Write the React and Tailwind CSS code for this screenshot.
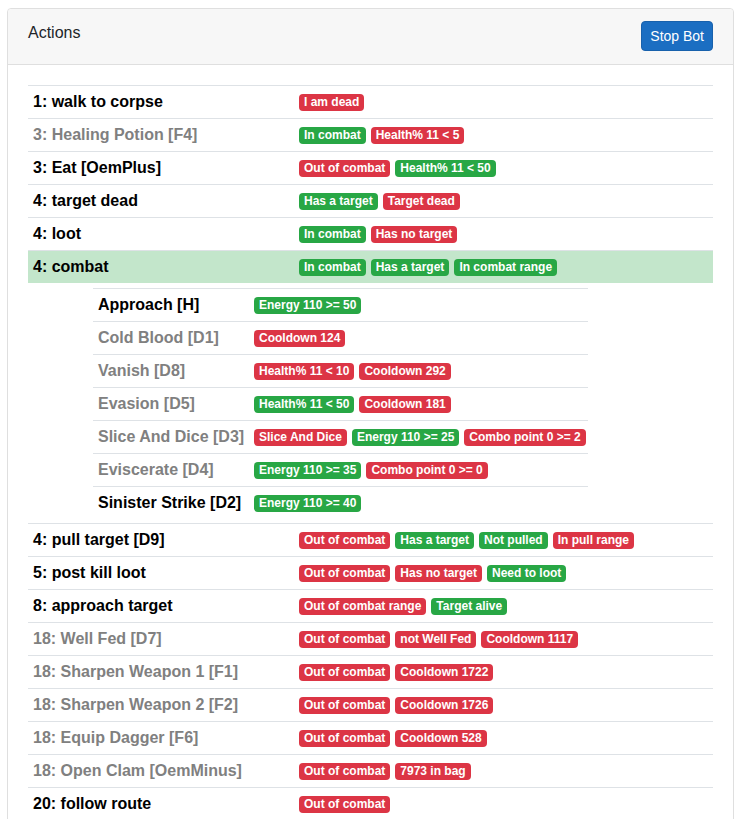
const G = "g"
const R = "r"

const actions = [
  { name: "1: walk to corpse", on: true, badges: [[R, "I am dead"]] },
  { name: "3: Healing Potion [F4]", on: false, badges: [[G, "In combat"], [R, "Health% 11 < 5"]] },
  { name: "3: Eat [OemPlus]", on: true, badges: [[R, "Out of combat"], [G, "Health% 11 < 50"]] },
  { name: "4: target dead", on: true, badges: [[G, "Has a target"], [R, "Target dead"]] },
  { name: "4: loot", on: true, badges: [[G, "In combat"], [R, "Has no target"]] },
  {
    name: "4: combat",
    on: true,
    active: true,
    badges: [[G, "In combat"], [G, "Has a target"], [G, "In combat range"]],
    spells: [
      { name: "Approach [H]", on: true, badges: [[G, "Energy 110 >= 50"]] },
      { name: "Cold Blood [D1]", on: false, badges: [[R, "Cooldown 124"]] },
      { name: "Vanish [D8]", on: false, badges: [[R, "Health% 11 < 10"], [R, "Cooldown 292"]] },
      { name: "Evasion [D5]", on: false, badges: [[G, "Health% 11 < 50"], [R, "Cooldown 181"]] },
      { name: "Slice And Dice [D3]", on: false, badges: [[R, "Slice And Dice"], [G, "Energy 110 >= 25"], [R, "Combo point 0 >= 2"]] },
      { name: "Eviscerate [D4]", on: false, badges: [[G, "Energy 110 >= 35"], [R, "Combo point 0 >= 0"]] },
      { name: "Sinister Strike [D2]", on: true, badges: [[G, "Energy 110 >= 40"]] },
    ],
  },
  { name: "4: pull target [D9]", on: true, badges: [[R, "Out of combat"], [G, "Has a target"], [G, "Not pulled"], [R, "In pull range"]] },
  { name: "5: post kill loot", on: true, badges: [[R, "Out of combat"], [R, "Has no target"], [G, "Need to loot"]] },
  { name: "8: approach target", on: true, badges: [[R, "Out of combat range"], [G, "Target alive"]] },
  { name: "18: Well Fed [D7]", on: false, badges: [[R, "Out of combat"], [R, "not Well Fed"], [R, "Cooldown 1117"]] },
  { name: "18: Sharpen Weapon 1 [F1]", on: false, badges: [[R, "Out of combat"], [R, "Cooldown 1722"]] },
  { name: "18: Sharpen Weapon 2 [F2]", on: false, badges: [[R, "Out of combat"], [R, "Cooldown 1726"]] },
  { name: "18: Equip Dagger [F6]", on: false, badges: [[R, "Out of combat"], [R, "Cooldown 528"]] },
  { name: "18: Open Clam [OemMinus]", on: false, badges: [[R, "Out of combat"], [R, "7973 in bag"]] },
  { name: "20: follow route", on: true, badges: [[R, "Out of combat"]] },
]

function Badge({ kind, text }) {
  return (
    <span
      className={
        kind === G
          ? "h-[17px] flex items-center px-[5px] rounded text-[12px] font-bold text-white leading-none whitespace-nowrap bg-[#28a745]"
          : "h-[17px] flex items-center px-[5px] rounded text-[12px] font-bold text-white leading-none whitespace-nowrap bg-[#dc3545]"
      }
    >
      {text}
    </span>
  )
}

function Badges({ list }) {
  return (
    <div className="flex items-center gap-[5px] px-[5px]">
      {list.map(([k, t], i) => (
        <Badge key={i} kind={k} text={t} />
      ))}
    </div>
  )
}

function SpellRow({ s }) {
  return (
    <div className="flex border-t border-[#dee2e6] h-[33px] items-center">
      <div
        className={
          s.on
            ? "w-[156px] shrink-0 px-[5px] font-bold whitespace-nowrap text-black"
            : "w-[156px] shrink-0 px-[5px] font-bold whitespace-nowrap text-[#808080]"
        }
      >
        {s.name}
      </div>
      <Badges list={s.badges} />
    </div>
  )
}

function ActionRow({ a }) {
  return (
    <>
      <div
        className={
          a.active
            ? "flex border-t border-[#dee2e6] h-[33px] items-center bg-[#c3e6cb]"
            : "flex border-t border-[#dee2e6] h-[33px] items-center"
        }
      >
        <div
          className={
            a.on
              ? "w-[266px] shrink-0 px-[5px] font-bold whitespace-nowrap text-black"
              : "w-[266px] shrink-0 px-[5px] font-bold whitespace-nowrap text-[#808080]"
          }
        >
          {a.name}
        </div>
        <Badges list={a.badges} />
      </div>
      {a.spells && (
        <div className="pt-[5px] pb-1">
          <div className="ml-[65px] w-[495px]">
            {a.spells.map((s, i) => (
              <SpellRow key={i} s={s} />
            ))}
          </div>
        </div>
      )}
    </>
  )
}

export default function App() {
  return (
    <div className="pl-[7px] pt-2 bg-white min-h-screen" style={{ fontFamily: '"Liberation Sans", Arial, sans-serif' }}>
      <div className="border border-[#dfdfdf] rounded bg-white text-[#212529]">
        <div className="flex items-start justify-between px-5 pt-3 pb-[13px] bg-[#f7f7f7] border-b border-[#dfdfdf] rounded-t">
          <div className="text-base leading-6">Actions</div>
          <button className="h-[30px] px-[8px] text-sm text-white bg-[#1b6ec2] border border-[#1861ac] rounded">
            Stop Bot
          </button>
        </div>
        <div className="p-5 text-base leading-6">
          {actions.map((a, i) => (
            <ActionRow key={i} a={a} />
          ))}
        </div>
      </div>
    </div>
  )
}
